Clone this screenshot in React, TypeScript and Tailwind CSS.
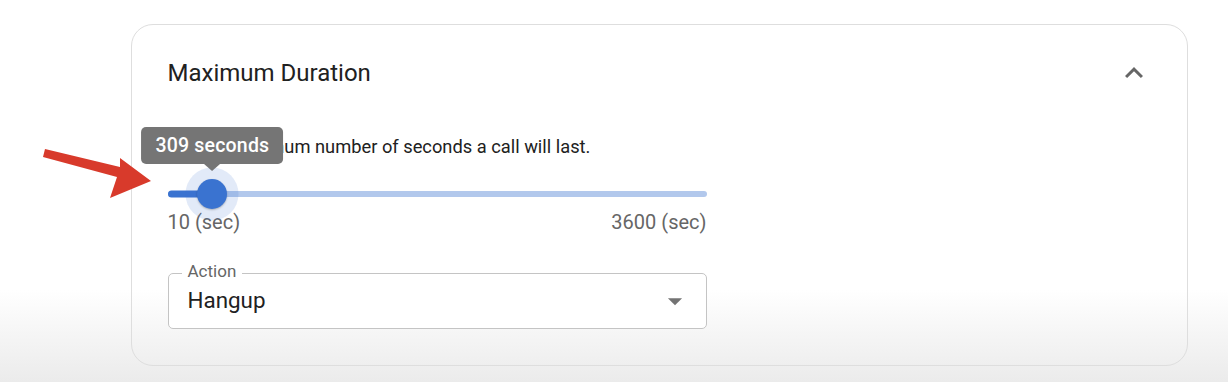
import React from "react";

const value = 309;
const min = 10;
const max = 3600;

export default function App() {
  const pct = ((value - min) / (max - min)) * 100;

  return (
    <div
      className="relative h-[382px] w-full overflow-hidden bg-[linear-gradient(180deg,#ffffff_76%,#ebebeb_100%)] pl-[131px] pr-[40px] pt-[24px]"
      style={{ fontFamily: "Roboto, 'Liberation Sans', sans-serif" }}
    >
      {/* card */}
      <div className="h-[342px] w-[1057px] rounded-[22px] border-[1.5px] border-[#dedede] pl-[35.5px] pr-[35px]">
        <div className="flex h-[96px] items-center justify-between">
          <h2 className="text-[24px] font-normal text-[#212121]">Maximum Duration</h2>
          <svg viewBox="0 0 24 24" className="h-[36px] w-[36px] fill-[#666]">
            <path d="M12 8l-6 6 1.41 1.41L12 10.83l4.59 4.58L18 14z" />
          </svg>
        </div>

        <div className="w-[539px]">
          <p className="mt-[14px] text-[18.3px] leading-[24px] text-[#212121]">
            Set the maximum number of seconds a call will last.
          </p>

          {/* slider */}
          <div className="relative mt-[20px] h-[30px]">
            <div className="absolute left-0 right-0 top-1/2 h-[6px] -translate-y-1/2 rounded-full bg-[#b2c8ec]" />
            <div
              className="absolute left-0 top-1/2 h-[7px] -translate-y-1/2 rounded-full bg-[#3a73d0]"
              style={{ width: `${pct}%` }}
            />
            <div
              className="absolute top-1/2 h-[53px] w-[53px] -translate-x-1/2 -translate-y-1/2 rounded-full bg-[#3a73d0]/15"
              style={{ left: `${pct}%` }}
            />
            <div
              className="absolute top-1/2 h-[30px] w-[30px] -translate-x-1/2 -translate-y-1/2 rounded-full bg-[#3a73d0] shadow-[0_1px_2px_rgba(0,0,0,0.25)]"
              style={{ left: `${pct}%` }}
            />
            {/* tooltip */}
            <div
              className="absolute bottom-[38px] flex -translate-x-1/2 flex-col items-center"
              style={{ left: `${pct}%` }}
            >
              <div className="whitespace-nowrap rounded-[5px] bg-[#757575] px-[14px] py-[6px] text-[19.5px] font-medium leading-[25px] tracking-[0.2px] text-white">
                309 seconds
              </div>
              <div className="h-0 w-0 border-x-[8px] border-t-[7px] border-x-transparent border-t-[#757575]" />
            </div>
          </div>

          <div className="mt-[2px] flex justify-between text-[20px] leading-[22px] text-[#666]">
            <span>10 (sec)</span>
            <span>3600 (sec)</span>
          </div>

          {/* select */}
          <div className="relative mt-[40px] flex h-[56px] items-center justify-between rounded-[5px] border-[1.5px] border-[#c4c4c4] bg-white pl-[19px] pr-[14px]">
            <span className="absolute -top-[14px] left-[13px] bg-white px-[6px] text-[17px] leading-[22px] text-[#666]">
              Action
            </span>
            <span className="text-[22.4px] text-[#212121]">Hangup</span>
            <svg viewBox="0 0 24 24" className="h-[34px] w-[34px] fill-[#737373]">
              <path d="M7 10l5 5 5-5z" />
            </svg>
          </div>
        </div>
      </div>

      {/* annotation arrow */}
      <svg
        className="pointer-events-none absolute left-[40px] top-[145px]"
        width="120"
        height="60"
        viewBox="0 0 120 60"
      >
        <polygon
          points="5,4 80,22 80,13 111,36 70,53 77,32 3,12"
          fill="#d83a2b"
        />
      </svg>
    </div>
  );
}
